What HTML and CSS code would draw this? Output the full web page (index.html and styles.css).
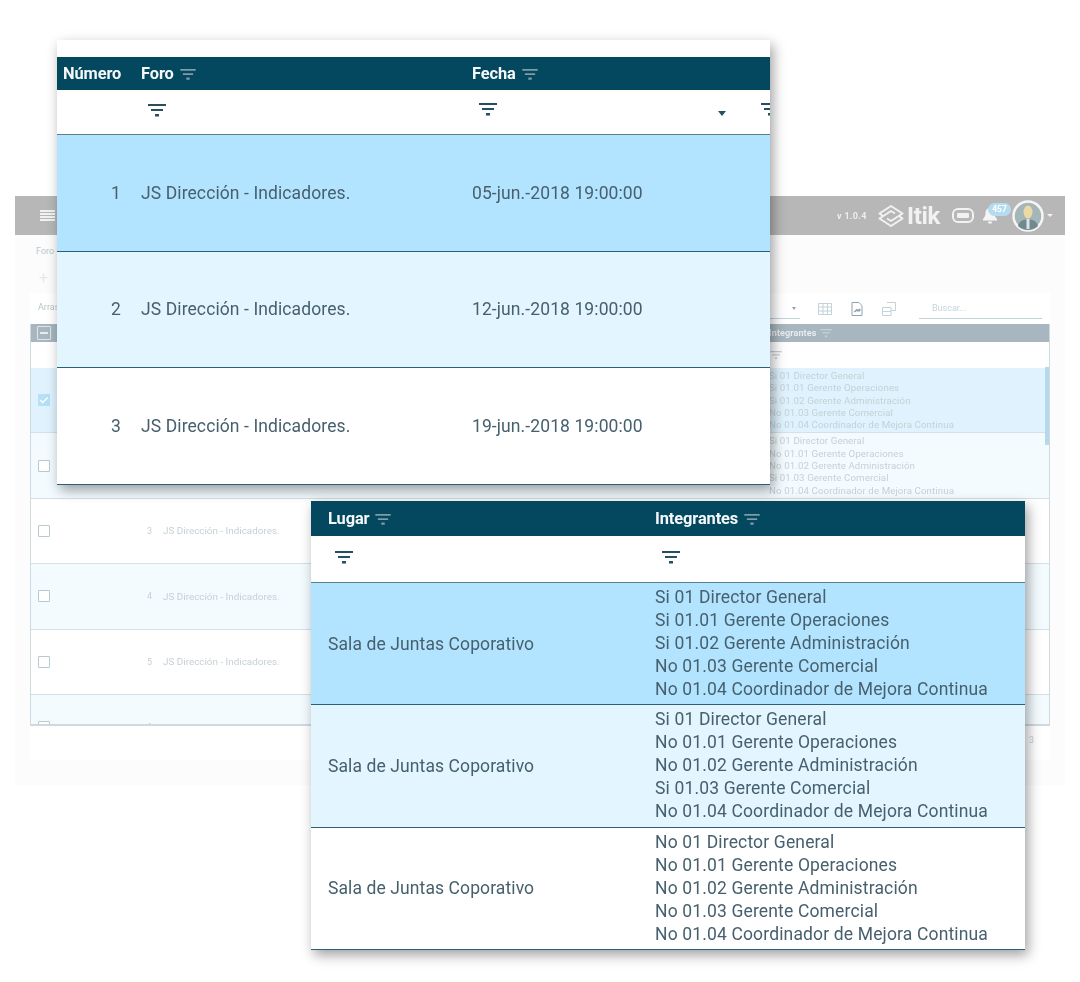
FILE: index.html
```html
<!DOCTYPE html>
<html lang="en">
  <head>
    <meta charset="UTF-8" />
    <title>Foro</title>
    <link rel="stylesheet" href="styles.css">
  </head>
  <body>
    <svg class="defs" width="0" height="0">
      <symbol id="filter" viewBox="0 0 18 14">
        <rect x="0" y="0" width="18" height="2"/>
        <rect x="3" y="5" width="12" height="2"/>
        <rect x="7" y="10" width="4" height="2.5"/>
      </symbol>
    </svg>

    <!-- app behind the two cards -->
    <div class="app">
      <div class="topbar">
        <div class="menu"><span></span><span></span><span></span><span></span></div>
        <div class="topright">
          <span class="version">v 1.0.4</span>
          <svg class="logo" viewBox="0 0 26 24" fill="none" stroke="#f2f2f2" stroke-width="2" stroke-linejoin="round">
            <path d="M5 12L1.500 9.500 13 2 24.500 9.500 13 17 9 14.500"/>
            <path d="M21 12L24.500 14.500 13 22 1.500 14.500 13 7 17 9.500"/>
          </svg>
          <span class="brand">Itik</span>
          <svg class="chip" viewBox="0 0 22 15" fill="none">
            <rect x="1" y="1" width="20" height="13" rx="5" stroke="#f2f2f2" stroke-width="2"/>
            <rect x="5" y="5" width="12" height="5" rx="1" fill="#f2f2f2"/>
          </svg>
          <div class="bell">
            <svg viewBox="0 0 16 17" fill="#f5f5f5">
              <path d="M8 1c-3 0-4.500 2.500-4.500 5 0 3-1 4.500-2.500 6v1.500h14V12c-1.500-1.500-2.500-3-2.500-6C12.500 3.500 11 1 8 1z"/>
              <rect x="6" y="14.500" width="4" height="2" rx="1"/>
            </svg>
            <span class="badge">457</span>
          </div>
          <svg class="avatar" viewBox="0 0 32 32">
            <circle cx="16" cy="16" r="14.500" fill="#a3b7b8" stroke="#f5f5f5" stroke-width="2.500"/>
            <path d="M6 26c1-5 5-6.500 10-6.500s9 1.500 10 6.500c-2.500 2.500-6 4-10 4s-7.500-1.500-10-4z" fill="#71898e"/>
            <ellipse cx="16" cy="12" rx="4.500" ry="6.500" fill="#ecd9a6"/>
            <rect x="14.500" y="19" width="3" height="10" fill="#dbe4e6"/>
          </svg>
          <span class="caret"></span>
        </div>
      </div>

      <div class="crumb">Foro</div>
      <div class="plus">+</div>

      <div class="panel">
        <div class="toolbar">
          <span class="arrange">Arrastre</span>
          <div class="tools">
            <span class="select"><span class="smallcaret"></span></span>
            <svg class="tool" viewBox="0 0 14 12" fill="none" stroke="#c4d2da">
              <path d="M.5.500h13v11H.500zM.5 4h13M.5 8h13M5 .5v11M9.500.5v11"/>
            </svg>
            <svg class="tool" viewBox="0 0 12 14" fill="none" stroke="#8ea4b0">
              <path d="M1 .5h7l3 3V13.500H1z"/>
              <path d="M3 10l3-3v2h3v-2z" fill="#8ea4b0"/>
            </svg>
            <svg class="tool" viewBox="0 0 14 14" fill="none" stroke="#c4d2da">
              <path d="M5 .5h8.500v8H9M.5 5.500H9v8H.5zM.5 9.500H9"/>
            </svg>
            <span class="search">Buscar...</span>
          </div>
        </div>

        <div class="grid">
          <div class="grow ghead">
            <div class="gcheck"><span class="box boxhead"><span class="minus"></span></span></div>
            <div></div>
            <div></div>
            <div class="gint">Integrantes <svg class="fi fi-pale"><use href="#filter"/></svg></div>
          </div>
          <div class="grow gfilter">
            <div></div><div></div><div></div>
            <div class="gint"><svg class="fi fi-pale"><use href="#filter"/></svg></div>
          </div>
          <div class="grow gbody sel">
            <div class="gcheck">
              <span class="box boxon">
                <svg viewBox="0 0 12 12" fill="none" stroke="#fff" stroke-width="1.800"><path d="M1.500 6l3 3 6-6"/></svg>
              </span>
            </div>
            <div class="gnum">1</div><div>JS Dirección - Indicadores.</div>
            <div class="gint">Si 01 Director General<br>Si 01.01 Gerente Operaciones<br>Si 01.02 Gerente Administración<br>No 01.03 Gerente Comercial<br>No 01.04 Coordinador de Mejora Continua</div>
          </div>
          <div class="grow gbody alt">
            <div class="gcheck"><span class="box"></span></div>
            <div class="gnum">2</div><div>JS Dirección - Indicadores.</div>
            <div class="gint">Si 01 Director General<br>No 01.01 Gerente Operaciones<br>No 01.02 Gerente Administración<br>Si 01.03 Gerente Comercial<br>No 01.04 Coordinador de Mejora Continua</div>
          </div>
          <div class="grow gbody">
            <div class="gcheck"><span class="box"></span></div>
            <div class="gnum">3</div><div>JS Dirección - Indicadores.</div><div></div>
          </div>
          <div class="grow gbody alt">
            <div class="gcheck"><span class="box"></span></div>
            <div class="gnum">4</div><div>JS Dirección - Indicadores.</div><div></div>
          </div>
          <div class="grow gbody">
            <div class="gcheck"><span class="box"></span></div>
            <div class="gnum">5</div><div>JS Dirección - Indicadores.</div><div></div>
          </div>
          <div class="grow gbody alt">
            <div class="gcheck"><span class="box"></span></div>
            <div class="gnum">6</div><div>JS Dirección - Indicadores.</div><div></div>
          </div>
          <div class="scroll"></div>
        </div>

        <div class="pager">3</div>
      </div>
    </div>

    <!-- top card -->
    <div class="card cardtop">
      <div class="row head">
        <div class="numhead">Número</div>
        <div>Foro <svg class="fi fi-head"><use href="#filter"/></svg></div>
        <div>Fecha <svg class="fi fi-head"><use href="#filter"/></svg></div>
      </div>
      <div class="row filters">
        <div></div>
        <div><svg class="fi fi-dark"><use href="#filter"/></svg></div>
        <div class="fechafilter">
          <svg class="fi fi-dark"><use href="#filter"/></svg>
          <span class="darkcaret"></span>
          <svg class="fi fi-dark lastfilter"><use href="#filter"/></svg>
        </div>
      </div>
      <div class="row data blue">
        <div class="num">1</div><div>JS Dirección - Indicadores.</div><div>05-jun.-2018 19:00:00</div>
      </div>
      <div class="row data light">
        <div class="num">2</div><div>JS Dirección - Indicadores.</div><div>12-jun.-2018 19:00:00</div>
      </div>
      <div class="row data">
        <div class="num">3</div><div>JS Dirección - Indicadores.</div><div>19-jun.-2018 19:00:00</div>
      </div>
    </div>

    <!-- bottom card -->
    <div class="card cardbottom">
      <div class="row head">
        <div>Lugar <svg class="fi fi-head"><use href="#filter"/></svg></div>
        <div>Integrantes <svg class="fi fi-head"><use href="#filter"/></svg></div>
      </div>
      <div class="row filters">
        <div><svg class="fi fi-dark"><use href="#filter"/></svg></div>
        <div><svg class="fi fi-dark"><use href="#filter"/></svg></div>
      </div>
      <div class="row data blue">
        <div>Sala de Juntas Coporativo</div>
        <div class="people">Si 01 Director General<br>Si 01.01 Gerente Operaciones<br>Si 01.02 Gerente Administración<br>No 01.03 Gerente Comercial<br>No 01.04 Coordinador de Mejora Continua</div>
      </div>
      <div class="row data light">
        <div>Sala de Juntas Coporativo</div>
        <div class="people">Si 01 Director General<br>No 01.01 Gerente Operaciones<br>No 01.02 Gerente Administración<br>Si 01.03 Gerente Comercial<br>No 01.04 Coordinador de Mejora Continua</div>
      </div>
      <div class="row data">
        <div>Sala de Juntas Coporativo</div>
        <div class="people">No 01 Director General<br>No 01.01 Gerente Operaciones<br>No 01.02 Gerente Administración<br>No 01.03 Gerente Comercial<br>No 01.04 Coordinador de Mejora Continua</div>
      </div>
    </div>
  </body>
</html>
```

FILE: styles.css
```css
*{
    margin: 0;
    padding: 0;
    box-sizing: border-box;
}
body{
    position: relative;
    height: 982px;
    overflow: hidden;
    background: #fff;
    font-family: Roboto, "Liberation Sans", sans-serif;
}
.defs{
    display: block;
}

/* background app */
.app{
    width: 1050px;
    height: 589px;
    margin: 196px 0 0 15px;
    background: #fcfcfc;
    filter: blur(.5px);
}
.topbar{
    display: flex;
    align-items: center;
    justify-content: space-between;
    height: 39px;
    padding-left: 25px;
    background: #b7b7b7;
}
.menu{
    display: flex;
    flex-direction: column;
    gap: 1px;
    width: 15px;
}
.menu span{
    height: 2px;
    background: #f2f2f2;
}
.topright{
    display: flex;
    align-items: center;
}
.version{
    width: 41px;
    font-size: 9px;
    font-weight: 700;
    color: #eee;
    letter-spacing: .3px;
}
.logo{
    width: 26px;
    height: 24px;
}
.brand{
    margin-left: 3px;
    width: 45px;
    font-size: 24px;
    font-weight: 700;
    color: #f2f2f2;
    letter-spacing: -0.3px;
}
.chip{
    width: 22px;
    height: 15px;
}
.bell{
    position: relative;
    width: 16px;
    height: 17px;
    margin-left: 8px;
}
.bell svg{
    display: block;
    width: 16px;
    height: 17px;
}
.badge{
    position: absolute;
    top: -4px;
    left: 6px;
    width: 23px;
    height: 13px;
    border-radius: 7px;
    background: #b4dcf0;
    color: #fff;
    font-size: 8.500px;
    font-weight: 700;
    line-height: 13px;
    text-align: center;
}
.avatar{
    width: 32px;
    height: 32px;
    margin-left: 14px;
}
.caret{
    width: 0;
    height: 0;
    margin: 0 12px 0 3px;
    border: 3.500px solid transparent;
    border-top: 3.500px solid #f2f2f2;
    border-bottom: 0;
}
.crumb{
    padding: 11px 0 0 21px;
    font-size: 9px;
    color: #b9c5cc;
}
.plus{
    margin-top: 13px;
    padding-left: 24px;
    height: 18px;
    font-size: 16px;
    line-height: 18px;
    color: #e2e8ec;
}
.panel{
    width: 1020px;
    height: 467px;
    margin: 6px 0 0 15px;
    background: #fff;
}
.toolbar{
    display: flex;
    align-items: center;
    justify-content: space-between;
    height: 31px;
    padding: 0 8px;
}
.arrange{
    margin-bottom: 4px;
    font-size: 9px;
    color: #b9c5cc;
}
.tools{
    display: flex;
    align-items: center;
}
.select{
    display: flex;
    align-items: center;
    justify-content: flex-end;
    width: 35px;
    height: 20px;
    padding-right: 4px;
    border-bottom: 1px solid #c4d2da;
}
.smallcaret{
    width: 0;
    height: 0;
    border: 2.500px solid transparent;
    border-top: 3px solid #90a4b0;
    border-bottom: 0;
}
.tool{
    width: 14px;
    height: 14px;
    margin-left: 18px;
}
.search{
    width: 123px;
    height: 21px;
    margin-left: 23px;
    padding: 5px 0 0 13px;
    border-bottom: 1px solid #c4d2da;
    font-size: 9px;
    color: #c4d4de;
}

/* background table */
.grid{
    position: relative;
    height: 402px;
    overflow: hidden;
    border: 1px solid #cfdadf;
    border-top: 0;
    border-bottom-width: 2px;
}
.grow{
    display: grid;
    grid-template-columns: 114px 18px 606px 1fr;
    align-items: center;
    font-size: 9.900px;
    color: #c6d0d6;
}
.ghead{
    height: 18px;
    background: #a7b6bf;
    color: #e6ecef;
    font-weight: 700;
}
.gfilter{
    height: 26px;
    background: #fff;
}
.gbody{
    height: 65.400px;
    border-bottom: 1px solid #d5e0e6;
    background: #fff;
}
.gbody.alt{
    background: #f3fbff;
}
.gbody.sel{
    background: #dff2fd;
}
.gcheck{
    padding-left: 7px;
}
.gnum{
    padding-left: 2px;
    font-size: 9px;
}
.gint{
    padding-top: 1px;
    font-size: 9.700px;
    line-height: 12.300px;
    letter-spacing: 0.1px;
}
.ghead .gint{
    padding-top: 0;
    font-size: 9px;
}
.box{
    display: block;
    width: 12px;
    height: 12px;
    border: 1.500px solid #b9c9d1;
    border-radius: 1px;
    background: #fff;
}
.box svg{
    display: block;
    width: 100%;
    height: 100%;
}
.boxhead{
    display: flex;
    align-items: center;
    justify-content: center;
    width: 14px;
    height: 14px;
    margin-left: -1px;
    border-color: #e0e7ea;
    background: #a7b6bf;
}
.minus{
    width: 8px;
    height: 2px;
    background: #e6ecef;
}
.boxon{
    border-color: #b5e0f5;
    background: #b5e0f5;
}
.scroll{
    position: absolute;
    top: 43px;
    right: 0;
    width: 4px;
    height: 78px;
    background: #b5d9ea;
}
.pager{
    padding: 9px 16px 0 0;
    font-size: 9px;
    color: #c6d0d6;
    text-align: right;
}

/* filter icon */
.fi{
    display: inline-block;
    width: 18px;
    height: 14px;
    vertical-align: middle;
}
.fi-head{
    width: 16px;
    height: 12px;
    margin-left: 2px;
    fill: #7f9dab;
}
.fi-dark{
    fill: #24505f;
}
.fi-pale{
    width: 12px;
    height: 9px;
    margin-left: 1px;
    fill: #c6d0d6;
}

/* the two cards */
.card{
    position: absolute;
    overflow: hidden;
    background: #fff;
    box-shadow: 3px 5px 12px rgba(0, 0, 0, .38);
    color: #47606e;
    filter: blur(.35px);
}
.cardtop{
    top: 40px;
    left: 57px;
    width: 713px;
    padding-top: 17px;
}
.cardbottom{
    top: 501px;
    left: 311px;
    width: 714px;
}
.row{
    display: grid;
    align-items: center;
}
.cardtop .row{
    grid-template-columns: 84px 331px 1fr;
}
.cardbottom .row{
    grid-template-columns: 327px 1fr;
    padding-left: 17px;
}
.head{
    background: #04485f;
    color: #f4f8fa;
    font-size: 16.400px;
    font-weight: 700;
    letter-spacing: -0.1px;
}
.cardtop .head{
    height: 33px;
}
.cardbottom .head{
    height: 35px;
}
.numhead{
    padding-left: 6px;
}
.filters{
    padding-bottom: 4px;
    border-bottom: 1.500px solid #5b7f92;
}
.cardtop .filters{
    height: 45px;
}
.cardbottom .filters{
    height: 47px;
}
.filters .fi{
    margin-left: 7px;
}
.fechafilter{
    display: flex;
    align-items: center;
}
.darkcaret{
    width: 0;
    height: 0;
    margin: 6px 0 0 221px;
    border: 4.500px solid transparent;
    border-top: 5px solid #24505f;
    border-bottom: 0;
}
.filters .lastfilter{
    flex: none;
    margin-left: 35px;
}
.data{
    border-bottom: 1.500px solid #2c5f78;
    font-size: 17.500px;
    letter-spacing: 0.1px;
}
.cardtop .data{
    height: 116.600px;
}
.cardbottom .data{
    height: 122.300px;
}
.num{
    padding-right: 20px;
    text-align: right;
}
.people{
    line-height: 23px;
    letter-spacing: .15px;
}
.blue{
    background: #b3e4ff;
}
.light{
    background: #e3f6ff;
}
```
